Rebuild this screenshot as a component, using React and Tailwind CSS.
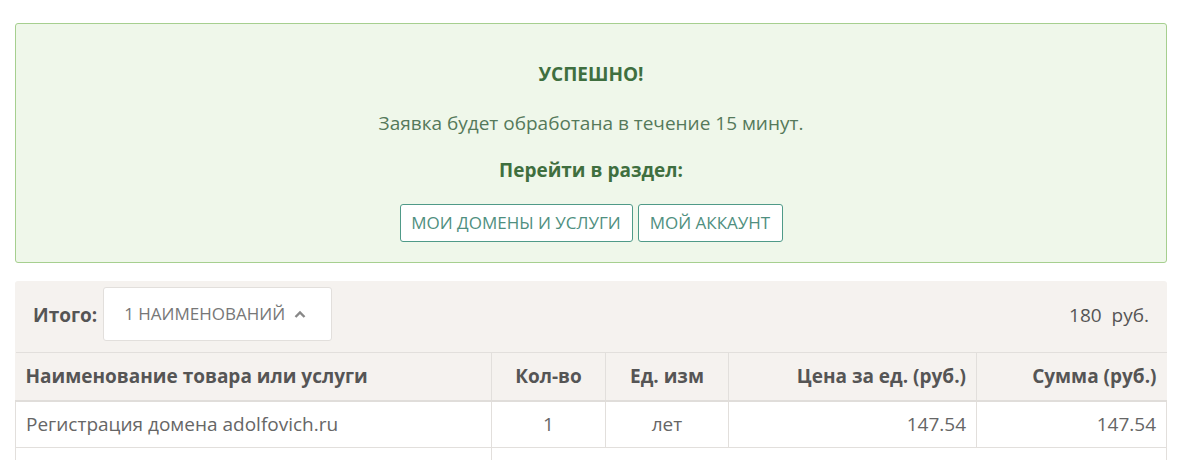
const rows = [
  { name: "Регистрация домена adolfovich.ru", qty: "1", unit: "лет", price: "147.54", sum: "147.54" },
]

const App = () => {
  return (
    <div className="min-h-screen bg-white font-['Open_Sans',sans-serif] text-[#555] pt-[23px] px-[15px] h-[460px] overflow-hidden">
      <div className="w-[1152px] rounded-[3px] border border-[#a6cf8f] bg-[#eff7ea] pt-[38px] pb-[20px] text-center">
        <div className="text-[19px] leading-6 font-bold text-[#3f6f3f]">УСПЕШНО!</div>
        <div className="mt-[25px] text-[19px] leading-6 text-[#55795a]">Заявка будет обработана в течение 15 минут.</div>
        <div className="mt-[23px] text-[19px] leading-6 font-bold text-[#3f6f3f]">Перейти в раздел:</div>
        <div className="mt-[22px] flex justify-center gap-[5px]">
          <button className="h-[38px] w-[233px] rounded-[3px] border border-[#4f9a88] bg-white text-[17px] uppercase text-[#4f8f80]">
            Мои домены и услуги
          </button>
          <button className="h-[38px] w-[145px] rounded-[3px] border border-[#4f9a88] bg-white text-[17px] uppercase text-[#4f8f80]">
            Мой аккаунт
          </button>
        </div>
      </div>

      <div className="mt-[18px] w-[1152px] bg-[#f5f2ef] rounded-t-[3px]">
        <div className="flex items-start pt-[6px] pb-[11px] pl-[18px] pr-[18px]">
          <span className="mt-[14px] text-[19px] font-bold text-[#555]">Итого:</span>
          <button className="ml-[6px] flex h-[54px] w-[229px] items-center rounded-[3px] border border-[#e2dfdc] bg-white pl-[20px] text-[17px] text-[#777]">
            1 НАИМЕНОВАНИЙ
            <svg className="ml-[9px]" width="12" height="9" viewBox="0 0 12 9">
              <path d="M1.5 7 L6 2.5 L10.5 7" fill="none" stroke="#888" strokeWidth="2.4" />
            </svg>
          </button>
          <span className="ml-auto mt-[14px] text-[19px] text-[#555]">180&nbsp; руб.</span>
        </div>

        <table className="w-full border-collapse text-[19px]">
          <thead>
            <tr className="h-[48px] bg-[#f5f2ef] border-t border-[#e2dfdc] border-b-2 border-b-[#e0ddda] font-bold text-[#555]">
              <th className="w-[476px] pl-[10px] text-left">Наименование товара или услуги</th>
              <th className="w-[114px] border-l border-[#e2dfdc] text-center">Кол-во</th>
              <th className="w-[123px] border-l border-[#e2dfdc] text-center">Ед. изм</th>
              <th className="w-[248px] border-l border-[#e2dfdc] pr-[10px] text-right">Цена за ед. (руб.)</th>
              <th className="border-l border-[#e2dfdc] pr-[10px] text-right">Сумма (руб.)</th>
            </tr>
          </thead>
          <tbody className="bg-white text-[#666]">
            {rows.map((r, i) => (
              <tr key={"row" + i} className="h-[47px] border-b border-[#e2dfdc]">
                <td className="border-l border-[#e2dfdc] pl-[10px]">{r.name}</td>
                <td className="border-l border-[#e2dfdc] text-center">{r.qty}</td>
                <td className="border-l border-[#e2dfdc] text-center">{r.unit}</td>
                <td className="border-l border-[#e2dfdc] pr-[10px] text-right">{r.price}</td>
                <td className="border-l border-r border-[#e2dfdc] pr-[10px] text-right">{r.sum}</td>
              </tr>
            ))}
            <tr className="h-[47px]">
              <td className="border-l border-[#e2dfdc]"></td>
              <td className="border-l border-[#e2dfdc]"></td>
              <td></td>
              <td></td>
              <td className="border-r border-[#e2dfdc]"></td>
            </tr>
          </tbody>
        </table>
      </div>
    </div>
  )
}

export default App
